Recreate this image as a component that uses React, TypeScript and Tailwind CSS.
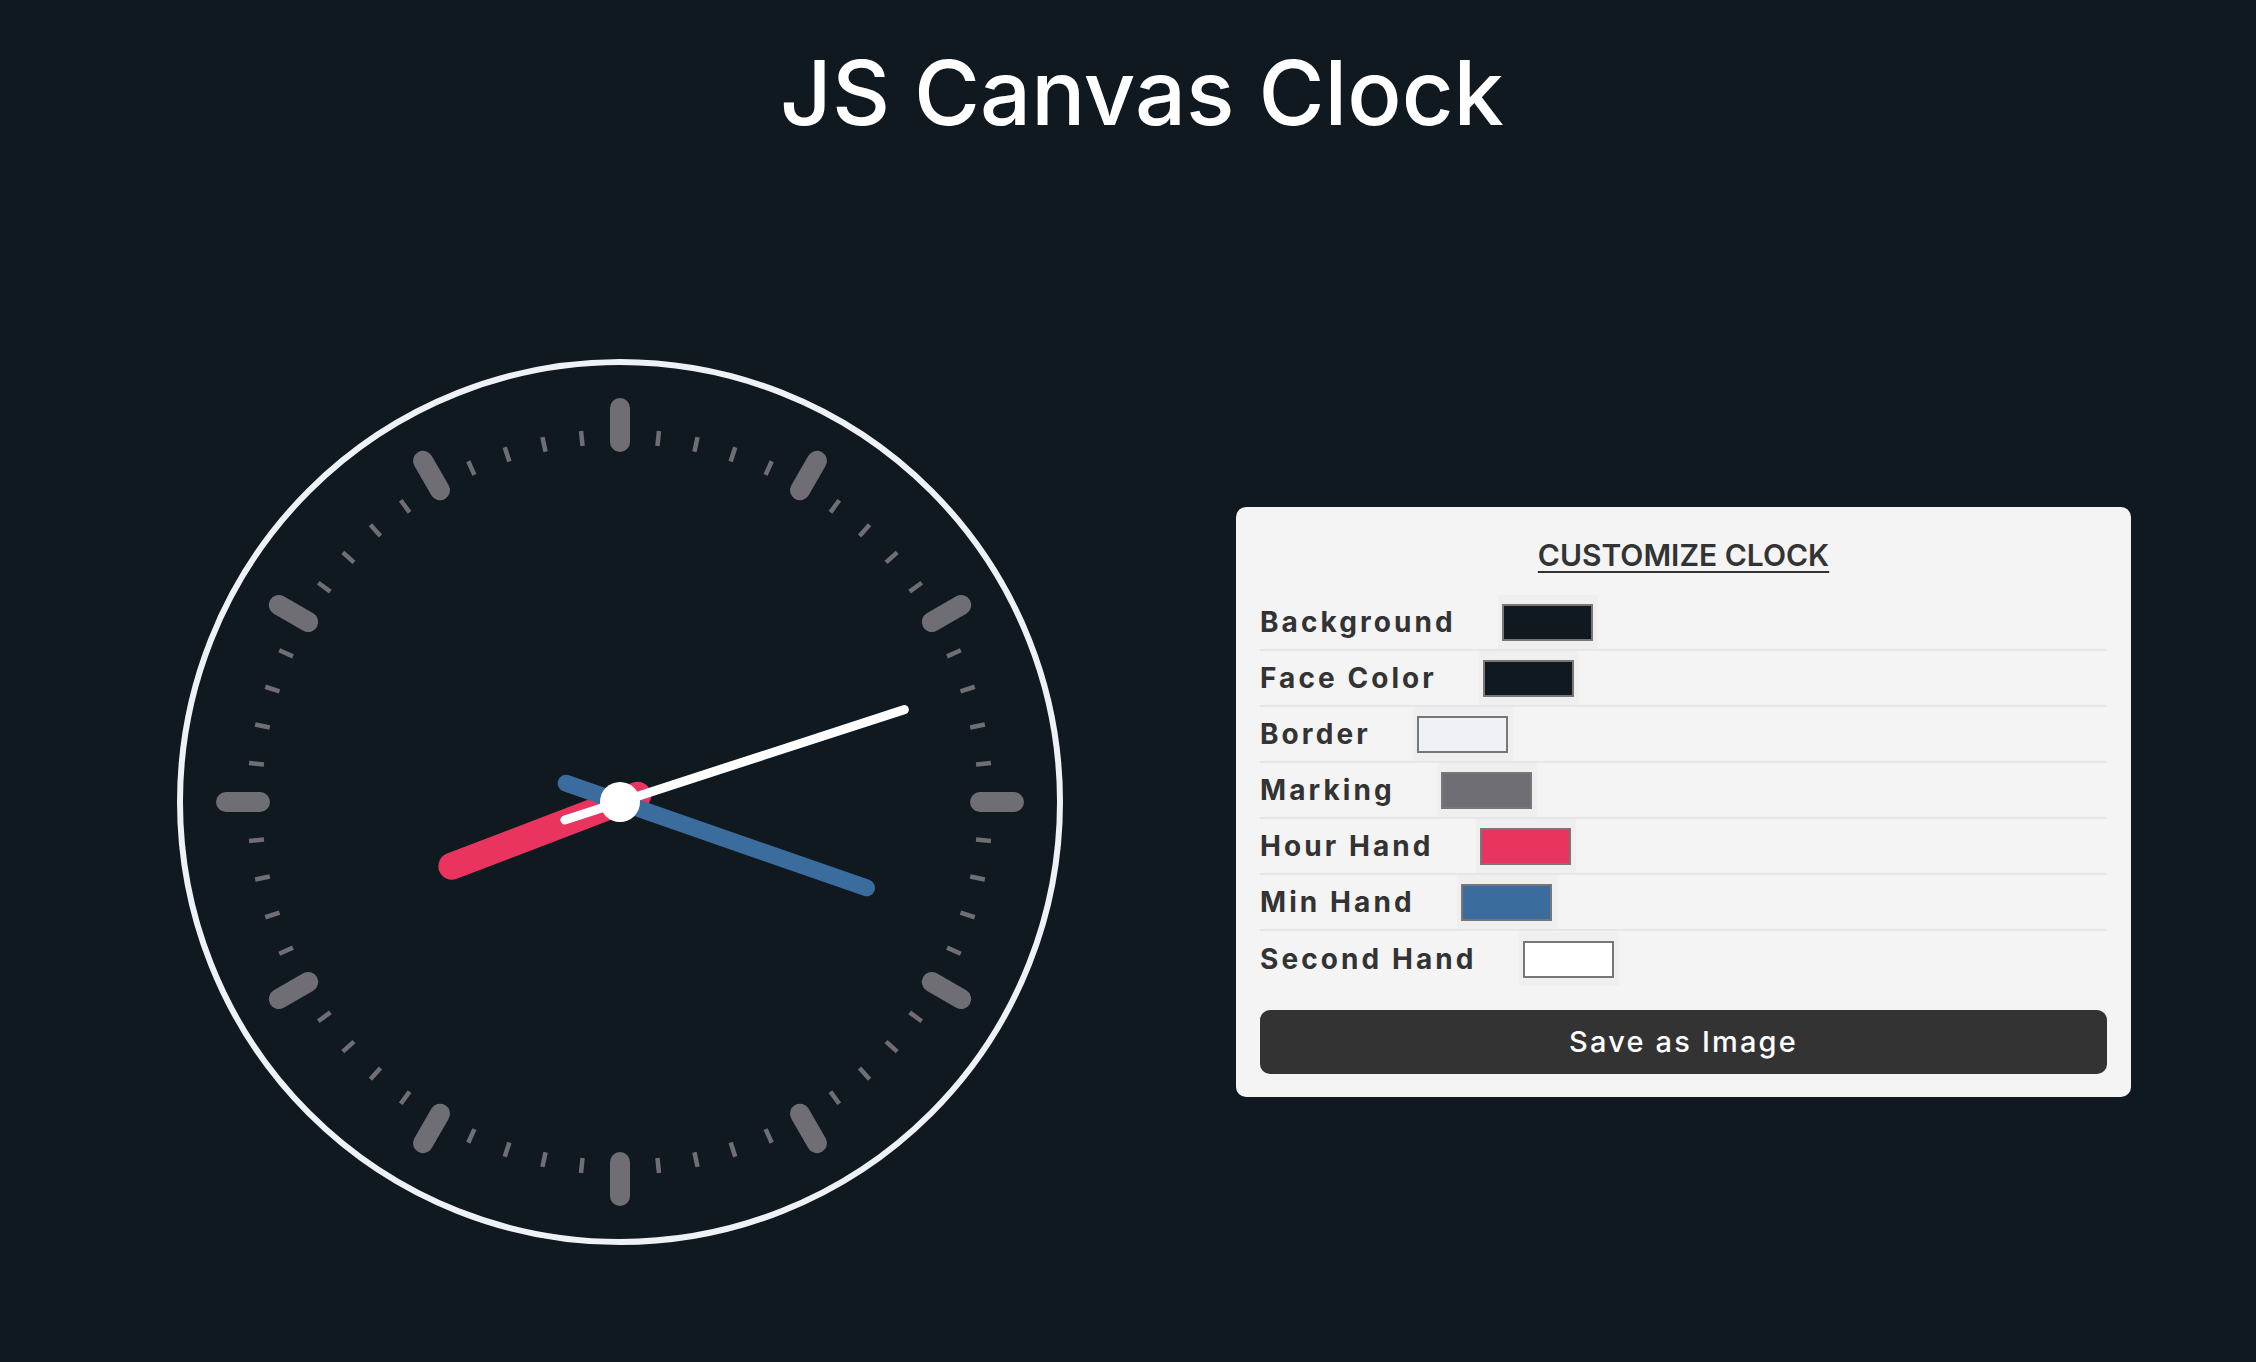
import type { ReactNode } from 'react'

const CX = 450
const CY = 450

const colors = {
  background: '#101920',
  face: '#101920',
  border: '#eef2f7',
  marking: '#6f6e74',
  hour: '#e8345f',
  minute: '#3b6c9e',
  second: '#ffffff',
}

const settings = [
  { label: 'Background', color: colors.background },
  { label: 'Face Color', color: colors.face },
  { label: 'Border', color: colors.border },
  { label: 'Marking', color: colors.marking },
  { label: 'Hour Hand', color: colors.hour },
  { label: 'Min Hand', color: colors.minute },
  { label: 'Second Hand', color: colors.second },
]

// point on a ray from the centre; angle in degrees clockwise from 12
function polar(deg: number, r: number) {
  const a = ((deg - 90) * Math.PI) / 180
  return { x: CX + r * Math.cos(a), y: CY + r * Math.sin(a) }
}

function Hand({ deg, from, to, width, color }: { deg: number; from: number; to: number; width: number; color: string }) {
  const a = polar(deg, from)
  const b = polar(deg, to)
  return <line x1={a.x} y1={a.y} x2={b.x} y2={b.y} stroke={color} strokeWidth={width} strokeLinecap="round" />
}

function Clock() {
  const hr = 8
  const min = 18
  const sec = 12
  const minDeg = (min + sec / 60) * 6
  const hrDeg = hr * 30 + (min + sec / 60) * 0.5
  const secDeg = sec * 6

  const ticks: ReactNode[] = []
  for (let i = 0; i < 60; i++) {
    const deg = i * 6
    if (i % 5 === 0) {
      const a = polar(deg, 360)
      const b = polar(deg, 394)
      ticks.push(
        <line key={i} x1={a.x} y1={a.y} x2={b.x} y2={b.y} stroke={colors.marking} strokeWidth={20} strokeLinecap="round" />,
      )
    } else {
      const a = polar(deg, 358)
      const b = polar(deg, 373)
      ticks.push(<line key={i} x1={a.x} y1={a.y} x2={b.x} y2={b.y} stroke={colors.marking} strokeWidth={4.5} />)
    }
  }

  return (
    <svg width="900" height="900" viewBox="0 0 900 900" className="shrink-0">
      <circle cx={CX} cy={CY} r={440} fill={colors.face} stroke={colors.border} strokeWidth={6} />
      {ticks}
      <Hand deg={hrDeg} from={-19} to={180} width={27} color={colors.hour} />
      <Hand deg={minDeg} from={-57} to={261} width={17} color={colors.minute} />
      <Hand deg={secDeg} from={-58} to={299} width={9} color={colors.second} />
      <circle cx={CX} cy={CY} r={20} fill={colors.second} />
    </svg>
  )
}

function SettingRow({ label, color, last }: { label: string; color: string; last: boolean }) {
  return (
    <div className={`flex h-[56px] items-center ${last ? 'h-[54px]' : 'border-b-2 border-[#e6e6ea]'}`}>
      <span className="text-[28px] font-bold tracking-[0.11em] text-[#333333]">{label}</span>
      <div className="ml-[42px] flex h-[54px] w-[100px] items-center justify-center bg-[#efefef]">
        <div className="h-[37px] w-[91px] border-2 border-[#777777]" style={{ backgroundColor: color }} />
      </div>
    </div>
  )
}

export default function App() {
  return (
    <div className="min-h-screen bg-[#101920] font-['Inter','Noto_Sans',sans-serif]">
      <h1 className="pt-[48px] pl-[28px] text-center text-[90px] font-medium leading-[90px] text-white">
        JS Canvas Clock
      </h1>

      <div className="mt-[214px] flex items-center gap-[166px] pl-[170px]">
        <Clock />

        <div className="w-[895px] rounded-[10px] bg-[#f4f4f4] px-[24px] pt-[24px] pb-[23px]">
          <h2 className="mt-[6px] mb-[22px] text-center text-[30px] font-semibold leading-[36px] text-[#333333] underline decoration-2 underline-offset-[5px]">
            CUSTOMIZE CLOCK
          </h2>

          {settings.map((s, i) => (
            <SettingRow key={s.label} label={s.label} color={s.color} last={i === settings.length - 1} />
          ))}

          <button className="mt-[23px] h-[64px] w-full rounded-[10px] bg-[#333333] text-[29px] font-medium tracking-[0.075em] text-white">
            Save as Image
          </button>
        </div>
      </div>
    </div>
  )
}
